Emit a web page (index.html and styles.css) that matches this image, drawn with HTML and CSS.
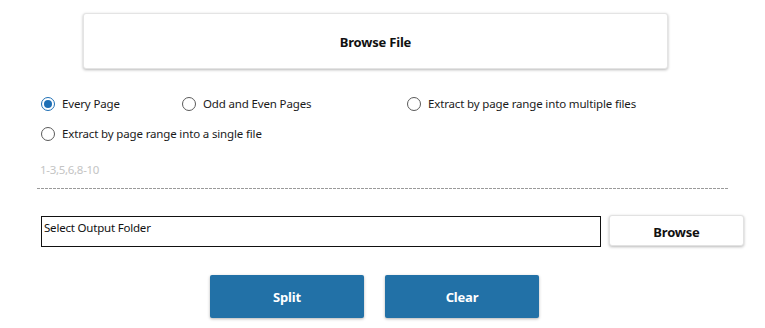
FILE: index.html
```html
<!DOCTYPE html>
<html>
<head>
<meta charset="utf-8">
<link rel="stylesheet" href="styles.css">
</head>
<body>
<div class="page">
  <div class="card-row">
    <button class="card-btn">Browse File</button>
  </div>
  <div class="radios">
    <label class="radio checked"><span class="dot"></span>Every Page</label>
    <label class="radio"><span class="dot"></span>Odd and Even Pages</label>
    <label class="radio"><span class="dot"></span>Extract by page range into multiple files</label>
    <label class="radio"><span class="dot"></span>Extract by page range into a single file</label>
  </div>
  <div class="range">
    <div class="placeholder">1-3,5,6,8-10</div>
    <div class="dashes"></div>
  </div>
  <div class="output-row">
    <div class="output-box">Select Output Folder</div>
    <button class="white-btn">Browse</button>
  </div>
  <div class="actions">
    <button class="blue-btn">Split</button>
    <button class="blue-btn">Clear</button>
  </div>
</div>
</body>
</html>
```
FILE: styles.css
```css
html, body {
  margin: 0;
  padding: 0;
  background: #ffffff;
}
body {
  font-family: "Noto Sans", "Open Sans", sans-serif;
  font-size: 12px;
  color: #1a1a1a;
}
button {
  font-family: inherit;
  cursor: pointer;
}
.page {
  width: 765px;
  height: 328px;
  overflow: hidden;
}
.card-row {
  padding-top: 13px;
  padding-left: 83px;
}
.card-btn {
  display: block;
  width: 585px;
  height: 56px;
  border: 1px solid #e4e4e4;
  border-radius: 3px;
  background: #fff;
  box-shadow: 0 1px 3px rgba(0,0,0,0.28);
  font-size: 13px;
  font-weight: 700;
  letter-spacing: -0.2px;
  color: #111;
  padding: 1px 0 0;
}
.radios {
  display: grid;
  grid-template-columns: 141px 225px auto;
  row-gap: 13px;
  padding-left: 41px;
  margin-top: 26px;
}
.radio {
  display: flex;
  align-items: center;
  height: 17px;
  font-size: 11.5px;
  letter-spacing: -0.15px;
  color: #1a1a1a;
  white-space: nowrap;
}
.dot {
  box-sizing: border-box;
  width: 14px;
  height: 14px;
  border: 1px solid #5a5a5a;
  border-radius: 50%;
  margin-right: 7px;
  flex: none;
  display: flex;
  align-items: center;
  justify-content: center;
}
.radio.checked .dot {
  border-color: #1e6fb5;
}
.radio.checked .dot::after {
  content: "";
  width: 8px;
  height: 8px;
  border-radius: 50%;
  background: #1e6fb5;
}
.range {
  padding-left: 37px;
  padding-top: 19px;
}
.placeholder {
  padding-left: 3px;
  color: #c4c4c4;
  font-size: 11.5px;
  letter-spacing: -0.3px;
  height: 18px;
  line-height: 18px;
}
.dashes {
  margin-top: 9px;
  width: 692px;
  height: 1px;
  background: repeating-linear-gradient(to right, #9a9a9a 0 3px, transparent 3px 4px);
}
.output-row {
  display: flex;
  align-items: flex-start;
  padding-left: 41px;
  margin-top: 26px;
}
.output-box {
  box-sizing: border-box;
  width: 560px;
  height: 31px;
  margin-top: 1px;
  border: 1px solid #111;
  padding: 3px 2px;
  font-size: 11.5px;
  letter-spacing: -0.2px;
  line-height: 16px;
  color: #111;
}
.white-btn {
  margin-left: 8px;
  width: 135px;
  height: 31px;
  border: 1px solid #e2e2e2;
  border-radius: 3px;
  background: #fff;
  box-shadow: 0 1px 3px rgba(0,0,0,0.28);
  font-size: 13px;
  font-weight: 700;
  letter-spacing: -0.2px;
  color: #111;
  padding: 3px 0 0;
}
.actions {
  display: flex;
  gap: 21px;
  padding-left: 210px;
  margin-top: 28px;
}
.blue-btn {
  width: 154px;
  height: 43px;
  border: none;
  border-radius: 2px;
  background: #2271a7;
  box-shadow: 0 1px 3px rgba(0,0,0,0.3);
  color: #fff;
  font-size: 13px;
  font-weight: 700;
  letter-spacing: -0.2px;
  padding: 0;
}
```
